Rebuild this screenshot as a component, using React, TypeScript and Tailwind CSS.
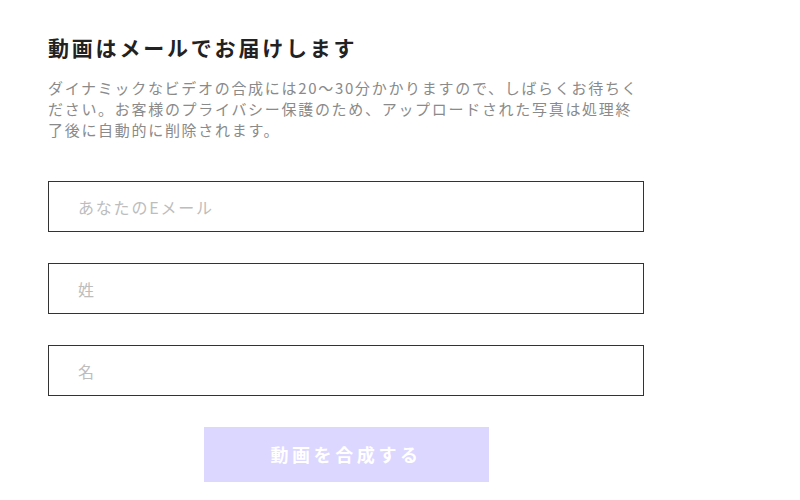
export default function App() {
  const font = { fontFamily: '"Noto Sans CJK JP", "Noto Sans", sans-serif' };
  return (
    <div className="w-[800px] h-[500px] bg-white" style={font}>
      <div className="pl-[48px] pt-[33px] w-[644px]">
        <h1 className="text-[21px] leading-[28px] font-bold text-[#222] tracking-[2.8px]">
          動画はメールでお届けします
        </h1>
        <p className="mt-[16px] text-[15px] leading-[21px] text-[#8a8a8a] tracking-[1.7px]">
          ダイナミックなビデオの合成には20～30分かかりますので、しばらくお待ちください。お客様のプライバシー保護のため、アップロードされた写真は処理終了後に自動的に削除されます。
        </p>
        <div className="mt-[41px] flex flex-col gap-[31px]">
          {["あなたのEメール", "姓", "名"].map((p) => (
            <input
              key={p}
              placeholder={p}
              className="h-[51px] w-full border border-[#333] pl-[29px] text-[16px] tracking-[1.8px] placeholder:text-[#bdbdbd] outline-none"
              style={font}
            />
          ))}
        </div>
        <div className="mt-[31px] flex justify-center">
          <button
            className="w-[285px] h-[55px] bg-[#dcd7ff] text-white text-[18px] font-bold tracking-[3.6px]"
            style={font}
          >
            動画を合成する
          </button>
        </div>
      </div>
    </div>
  );
}
